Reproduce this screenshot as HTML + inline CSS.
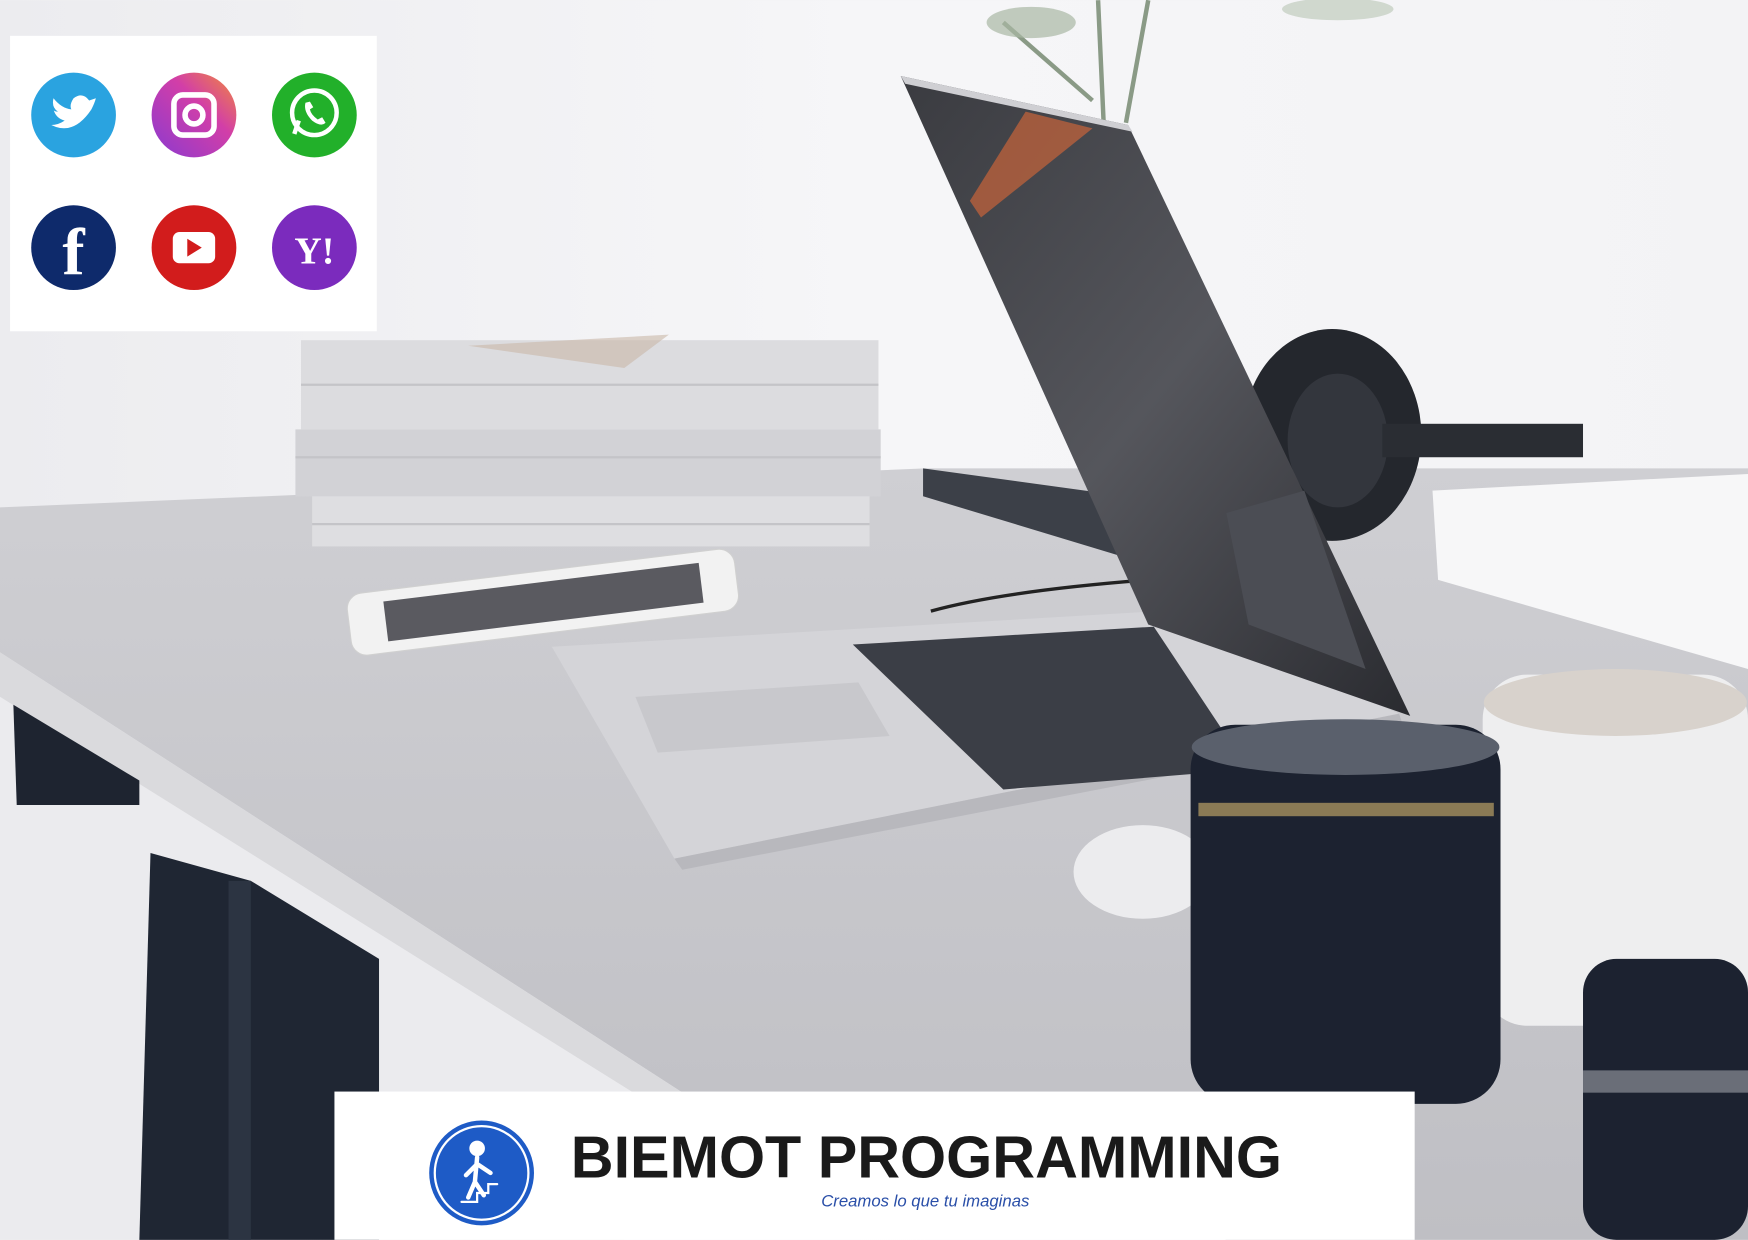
<!DOCTYPE html>
<html><head><meta charset="utf-8"><style>
html,body{margin:0;padding:0;background:#f2f2f4;}
svg{display:block}
</style></head><body>
<svg width="1748" height="1240" viewBox="0 0 1568 1112" xmlns="http://www.w3.org/2000/svg">
<defs>
<linearGradient id="wall" x1="0" y1="0" x2="1" y2="0"><stop offset="0" stop-color="#ececef"/><stop offset=".5" stop-color="#f6f6f8"/><stop offset="1" stop-color="#f3f3f5"/></linearGradient>
<linearGradient id="desk" x1="0" y1="0" x2="0" y2="1"><stop offset="0" stop-color="#cfcfd3"/><stop offset="1" stop-color="#bfbfc4"/></linearGradient>
<linearGradient id="scr" x1="0" y1="0" x2="1" y2="1"><stop offset="0" stop-color="#3a3b40"/><stop offset=".5" stop-color="#55565c"/><stop offset="1" stop-color="#2a2b30"/></linearGradient>
<linearGradient id="ig" x1="0" y1="1" x2="1" y2="0"><stop offset="0" stop-color="#8a3ad0"/><stop offset=".6" stop-color="#d23ea8"/><stop offset="1" stop-color="#f28a3a"/></linearGradient>
</defs>
<rect width="1568" height="1112" fill="url(#wall)"/>
<path d="M985 0 L990 110 M1030 0 L1010 110 M900 20 L980 90" stroke="#8a9a86" stroke-width="4" fill="none"/>
<ellipse cx="925" cy="20" rx="40" ry="14" fill="#a9b8a4" opacity=".7"/>
<ellipse cx="1200" cy="8" rx="50" ry="10" fill="#b8c4b4" opacity=".6"/>
<polygon points="0,455 830,420 1568,420 1568,1112 1100,1112 620,985 0,585" fill="url(#desk)"/>
<polygon points="0,585 620,985 600,1000 0,625" fill="#dadadd"/>
<polygon points="0,625 600,1000 560,1112 0,1112" fill="#ebebee"/>
<polygon points="12,632 125,700 125,722 15,722" fill="#1e2430"/>
<polygon points="135,765 225,790 340,860 340,1112 125,1112" fill="#1f2633"/>
<polygon points="205,790 225,790 225,1112 205,1112" fill="#2c3442"/>
<rect x="270" y="305" width="518" height="80" fill="#dcdcdf"/>
<rect x="265" y="385" width="525" height="60" fill="#d2d2d6"/>
<rect x="280" y="445" width="500" height="45" fill="#dedee1"/>
<path d="M270 345H788M265 410H790M280 470H780" stroke="#c4c4c8" stroke-width="2"/>
<path d="M420 310 L600 300 L560 330 Z" fill="#c9b8a8" opacity=".6"/>
<polygon points="828,420 1010,445 1010,500 828,445" fill="#3c4048"/>
<ellipse cx="1195" cy="390" rx="80" ry="95" fill="#24272d"/>
<ellipse cx="1200" cy="395" rx="45" ry="60" fill="#33363d"/>
<rect x="1240" y="380" width="180" height="30" fill="#2a2d33"/>
<polygon points="1285,440 1568,425 1568,600 1290,520" fill="#f7f7f8"/>
<g transform="rotate(-7 487 540)"><rect x="312" y="512" width="350" height="56" rx="14" fill="#f2f2f2" stroke="#d0d0d0"/><rect x="345" y="522" width="285" height="36" fill="#5a5a60"/></g>
<path d="M835 548 Q900 530 1030 520" stroke="#222" stroke-width="3" fill="none"/>
<polygon points="495,580 1040,548 1255,640 605,770" fill="#d4d4d8"/>
<polygon points="605,770 1255,640 1260,655 612,780" fill="#b8b8bd"/>
<polygon points="765,578 1035,562 1120,690 900,708" fill="#3b3e46"/>
<polygon points="570,625 770,612 798,660 590,675" fill="#c8c8cc"/>
<polygon points="808,68 1012,112 1265,642 1030,560" fill="url(#scr)"/>
<polygon points="808,68 1012,112 1016,118 812,75" fill="#cfcfd3"/>
<path d="M870 180 L920 100 L980 115 L880 195 Z" fill="#c8643a" opacity=".7"/>
<polygon points="1100,460 1170,440 1225,600 1120,560" fill="#4b4d54"/>
<ellipse cx="1025" cy="782" rx="62" ry="42" fill="#ececee"/>
<rect x="1330" y="605" width="238" height="315" rx="40" fill="#eeeeef"/>
<ellipse cx="1449" cy="630" rx="118" ry="30" fill="#d8d2cc"/>
<rect x="1068" y="650" width="278" height="340" rx="40" fill="#1c2230"/>
<ellipse cx="1207" cy="670" rx="138" ry="25" fill="#5a606c"/>
<rect x="1075" y="720" width="265" height="12" fill="#8a7a55"/>
<rect x="1420" y="860" width="148" height="252" rx="30" fill="#1c2230"/>
<rect x="1420" y="960" width="148" height="20" fill="#6a6e78"/>
<rect x="9" y="32" width="329" height="265" fill="#ffffff"/>
<g font-family="Liberation Sans, sans-serif" font-weight="bold" fill="#fff" text-anchor="middle">
<circle cx="66" cy="103" r="38" fill="#2aa3e0"/>
<path d="M46 112 Q66 122 82 98 Q85 92 86 88 L80 90 Q74 82 66 88 Q62 94 64 98 Q55 97 48 88 Q46 96 52 100 Q48 100 48 98 Q50 106 58 108 Q52 112 46 112Z" fill="#fff"/>
<circle cx="174" cy="103" r="38" fill="url(#ig)"/>
<rect x="156" y="85" width="36" height="36" rx="8" fill="none" stroke="#fff" stroke-width="5"/>
<circle cx="174" cy="103" r="8" fill="none" stroke="#fff" stroke-width="5"/>
<circle cx="282" cy="103" r="38" fill="#22b02a"/>
<circle cx="282" cy="101" r="20" fill="none" stroke="#fff" stroke-width="4"/>
<path d="M264 120 L268 108" stroke="#fff" stroke-width="4"/>
<path d="M274 92 Q272 100 280 108 Q288 114 292 110 L289 105 L285 107 Q279 103 278 98 L281 96 L278 91 Z" fill="#fff"/>
<circle cx="66" cy="222" r="38" fill="#0e2a6b"/>
<text x="66" y="246" font-size="60" font-family="Liberation Serif, serif">f</text>
<circle cx="174" cy="222" r="38" fill="#d21c1c"/>
<rect x="155" y="208" width="38" height="28" rx="6" fill="#fff"/>
<polygon points="168,214 168,230 181,222" fill="#d21c1c"/>
<circle cx="282" cy="222" r="38" fill="#7b2bbd"/>
<text x="282" y="236" font-size="34" font-family="Liberation Serif, serif">Y!</text>
</g>
<rect x="300" y="979" width="969" height="133" fill="#ffffff"/>
<circle cx="432" cy="1052" r="47" fill="#1e5bc6"/>
<circle cx="432" cy="1052" r="42" fill="none" stroke="#fff" stroke-width="2"/>
<g stroke="#fff" stroke-width="4" fill="none" stroke-linecap="round">
<circle cx="428" cy="1030" r="5" fill="#fff"/>
<path d="M428 1038 L426 1060 L420 1074 M426 1060 L434 1072 M428 1044 L440 1052 M428 1044 L418 1054"/>
<path d="M414 1078 H428 V1070 H438 V1062 H446" stroke-width="2"/>
</g>
<text x="512" y="1056" font-family="Liberation Sans, sans-serif" font-weight="bold" font-size="53" fill="#1a1a1a" textLength="638" lengthAdjust="spacingAndGlyphs">BIEMOT PROGRAMMING</text>
<text x="830" y="1082" font-family="Liberation Sans, sans-serif" font-style="italic" font-size="15" fill="#2a4fa8" text-anchor="middle">Creamos lo que tu imaginas</text>
</svg>
</body></html>
